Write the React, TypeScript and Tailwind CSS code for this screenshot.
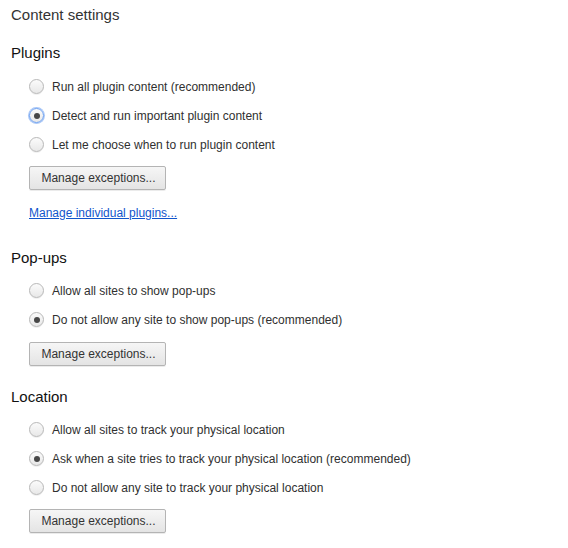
import type { ReactNode } from "react"

type Option = { label: string; checked?: boolean; focused?: boolean }

const FONT = "font-['Liberation_Sans',Arial,sans-serif]"

function Radio({ checked, focused }: { checked?: boolean; focused?: boolean }) {
  return (
    <span
      className={
        "relative w-[15px] h-[15px] shrink-0 rounded-full border bg-gradient-to-b from-[#fbfbfb] to-[#e8e8e8] shadow-[0_1px_0_rgba(0,0,0,0.06)] flex items-center justify-center " +
        (focused ? "border-[#6a9ef0] ring-1 ring-[#a9c7f7]" : "border-[#b8b8b8]")
      }
    >
      {checked && <span className="w-[6px] h-[6px] rounded-full bg-[#474747]" />}
    </span>
  )
}

function RadioRow({ option }: { option: Option }) {
  return (
    <div className="h-[29px] flex items-center gap-[8px]">
      <Radio checked={option.checked} focused={option.focused} />
      <span className="text-[12px] text-[#303030]">{option.label}</span>
    </div>
  )
}

function ManageButton() {
  return (
    <button className="h-[24px] w-[137px] rounded-[2px] border border-[#b4b4b4] bg-gradient-to-b from-[#f6f6f6] to-[#e4e4e4] shadow-[0_1px_0_rgba(0,0,0,0.08)] text-[12px] text-[#333] pl-[2px]">
      Manage exceptions...
    </button>
  )
}

function Section({
  title,
  options,
  listTop,
  buttonTop,
  children,
}: {
  title: string
  options: Option[]
  listTop: string
  buttonTop: string
  children?: ReactNode
}) {
  return (
    <section>
      <h2 className="h-[20px] leading-[20px] text-[15px] text-[#111]">{title}</h2>
      <div className={"pl-[18px] " + listTop}>
        {options.map((o) => (
          <RadioRow key={o.label} option={o} />
        ))}
        <div className={buttonTop}>
          <ManageButton />
        </div>
        {children}
      </div>
    </section>
  )
}

export default function App() {
  return (
    <div className={"bg-white min-h-[548px] w-[568px] px-[11px] " + FONT}>
      <h1 className="pt-[5px] h-[25px] leading-[20px] text-[15px] text-[#333]">Content settings</h1>

      <div className="mt-[18px]">
        <Section
          title="Plugins"
          listTop="pt-[9px]"
          buttonTop="mt-[6px]"
          options={[
            { label: "Run all plugin content (recommended)" },
            { label: "Detect and run important plugin content", checked: true, focused: true },
            { label: "Let me choose when to run plugin content" },
          ]}
        >
          <div className="mt-[12px] h-[20px] leading-[20px]">
            <a href="#" className="text-[12px] text-[#1155cc] underline">
              Manage individual plugins...
            </a>
          </div>
        </Section>
      </div>

      <div className="mt-[26px]">
        <Section
          title="Pop-ups"
          listTop="pt-[8px]"
          buttonTop="mt-[7px]"
          options={[
            { label: "Allow all sites to show pop-ups" },
            { label: "Do not allow any site to show pop-ups (recommended)", checked: true },
          ]}
        />
      </div>

      <div className="mt-[21px]">
        <Section
          title="Location"
          listTop="pt-[8px]"
          buttonTop="mt-[6px]"
          options={[
            { label: "Allow all sites to track your physical location" },
            { label: "Ask when a site tries to track your physical location (recommended)", checked: true },
            { label: "Do not allow any site to track your physical location" },
          ]}
        />
      </div>
    </div>
  )
}
